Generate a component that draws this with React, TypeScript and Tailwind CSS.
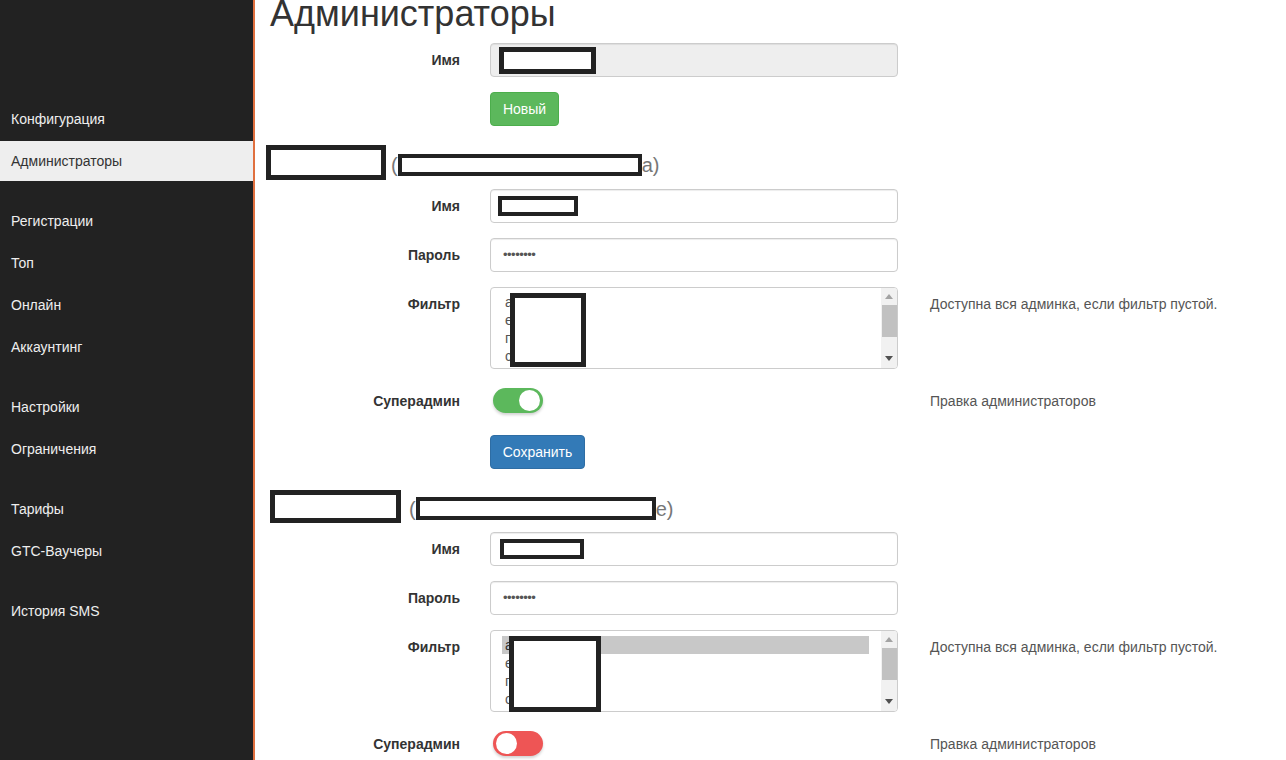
import React from "react";

const navGroups: string[][] = [
  ["Конфигурация", "Администраторы"],
  ["Регистрации", "Топ", "Онлайн", "Аккаунтинг"],
  ["Настройки", "Ограничения"],
  ["Тарифы", "GTC-Ваучеры"],
  ["История SMS"],
];

function Sidebar() {
  return (
    <aside className="w-[255px] shrink-0 bg-[#222222] border-r-2 border-[#e0703f] pt-[99px] min-h-[760px]">
      {navGroups.map((g, gi) => (
        <div key={gi} className="mb-[20px]">
          {g.map((item) => {
            const active = item === "Администраторы";
            return (
              <div
                key={item}
                className={
                  active
                    ? "h-[40px] mb-[2px] flex items-center pl-[11px] bg-[#eeeeee] text-[#333333] text-[14px]"
                    : "h-[40px] mb-[2px] flex items-center pl-[11px] text-[#eeeeee] text-[14px]"
                }
              >
                {item}
              </div>
            );
          })}
        </div>
      ))}
    </aside>
  );
}

function Label({ text }: { text: string }) {
  return (
    <div className="w-[190px] shrink-0 text-right font-bold text-[14px] leading-[20px] pt-[7px] text-[#333333]">
      {text}
    </div>
  );
}

function Row({
  label,
  children,
  help,
  className,
}: {
  label: string;
  children: React.ReactNode;
  help?: string;
  className?: string;
}) {
  return (
    <div className={"flex items-start " + (className ?? "")}>
      <Label text={label} />
      <div className="ml-[30px] w-[408px] shrink-0">{children}</div>
      {help && (
        <div className="ml-[32px] pt-[7px] text-[14px] leading-[20px] text-[#555555]">{help}</div>
      )}
    </div>
  );
}

function NameInput({ w, h, disabled, pl, border }: { w: string; h: string; disabled?: boolean; pl: string; border: string }) {
  return (
    <div
      className={
        (disabled ? "bg-[#eeeeee] " : "bg-white ") +
        "h-[34px] border border-[#cccccc] rounded-[4px] flex items-center shadow-[inset_0_1px_1px_rgba(0,0,0,0.075)] " +
        pl
      }
    >
      <div className={"bg-white border-[#222222] " + w + " " + h + " " + border} />
    </div>
  );
}

function PasswordInput() {
  return (
    <div className="h-[34px] border border-[#cccccc] rounded-[4px] flex items-center pl-[12px] bg-white shadow-[inset_0_1px_1px_rgba(0,0,0,0.075)] text-[#555555] text-[13px] tracking-[-0.5px]">
      ••••••••
    </div>
  );
}

function FilterBox({ selected, second }: { selected?: boolean; second?: boolean }) {
  const lines = ["a", "e", "п", "c"];
  return (
    <div className="relative w-[408px] h-[82px]">
      <div className="w-[408px] h-[82px] border border-[#cccccc] rounded-[4px] overflow-hidden bg-white flex">
        <div className="flex-1 pt-[5px] pl-[11px] pr-[12px] text-[14px] leading-[18px] text-[#555555]">
          {lines.map((l, i) => (
            <div
              key={i}
              className={
                selected && i === 0 ? "px-[3px] bg-[#c8c8c8] text-[#333333]" : "px-[3px]"
              }
            >
              {l}
            </div>
          ))}
        </div>
        <div className="w-[16px] bg-[#f1f1f1] flex flex-col items-center relative">
          <div className="mt-[6px] w-0 h-0 border-l-[4px] border-r-[4px] border-b-[5px] border-l-transparent border-r-transparent border-b-[#a3a3a3]" />
          <div className="mt-[6px] w-[15px] h-[32px] bg-[#c1c1c1]" />
          <div className="flex-1" />
          <div className="mb-[7px] w-0 h-0 border-l-[4px] border-r-[4px] border-t-[5px] border-l-transparent border-r-transparent border-t-[#505050]" />
        </div>
      </div>
      {second ? (
        <div className="absolute left-[19px] top-[6px] w-[92px] h-[76px] bg-white border-[5px] border-[#222222]" />
      ) : (
        <div className="absolute left-[20px] top-[6px] w-[76px] h-[74px] bg-white border-[5px] border-[#222222]" />
      )}
    </div>
  );
}

function Toggle({ on }: { on: boolean }) {
  return (
    <div
      className={
        (on ? "bg-[#5cb85c] " : "bg-[#ee5555] ") +
        "relative mt-[4px] ml-[3px] w-[50px] h-[25px] rounded-full shadow-[0_2px_3px_rgba(0,0,0,0.18)]"
      }
    >
      <div
        className={
          (on ? "right-[3px] " : "left-[3px] ") +
          "absolute top-[2px] w-[21px] h-[21px] rounded-full bg-white"
        }
      />
    </div>
  );
}

function AdminSection({ second }: { second?: boolean }) {
  return (
    <div>
      {second ? (
        <div className="flex items-center h-[33px] mb-[9px] text-[20px] text-[#777777]">
          <div className="w-[131px] h-[33px] bg-white border-[5px] border-[#222222]" />
          <span className="ml-[8px] mt-[4px]">(</span>
          <div className="w-[240px] h-[23px] mt-[4px] bg-white border-[4px] border-[#222222]" />
          <span className="mt-[4px]">e)</span>
        </div>
      ) : (
        <div className="flex items-center h-[35px] mb-[9px] -ml-[4px] text-[20px] text-[#777777]">
          <div className="w-[120px] h-[35px] bg-white border-[5px] border-[#222222]" />
          <span className="ml-[5px] mt-[5px]">(</span>
          <div className="w-[244px] h-[22px] mt-[5px] bg-white border-[4px] border-[#222222]" />
          <span className="mt-[5px]">a)</span>
        </div>
      )}
      <Row label="Имя" className="mb-[15px]">
        {second ? (
          <NameInput w="w-[84px]" h="h-[20px]" pl="pl-[9px]" border="border-[4px]" />
        ) : (
          <NameInput w="w-[80px]" h="h-[20px]" pl="pl-[7px]" border="border-[4px]" />
        )}
      </Row>
      <Row label="Пароль" className="mb-[15px]">
        <PasswordInput />
      </Row>
      <Row label="Фильтр" className="mb-[15px]" help="Доступна вся админка, если фильтр пустой.">
        <FilterBox selected={second} second={second} />
      </Row>
      <Row label="Суперадмин" className="h-[34px]" help="Правка администраторов">
        <Toggle on={!second} />
      </Row>
      {!second && (
        <div className="mt-[17px] ml-[220px]">
          <button className="h-[34px] w-[95px] rounded-[4px] bg-[#337ab7] border border-[#2e6da4] text-white text-[14px]">
            Сохранить
          </button>
        </div>
      )}
    </div>
  );
}

export default function App() {
  return (
    <div className="flex w-[1286px] h-[760px] overflow-hidden bg-white font-['Liberation_Sans',Arial,sans-serif] text-[14px] text-[#333333]">
      <Sidebar />
      <main className="flex-1 pl-[15px]">
        <h1 className="mt-[-6px] mb-[9px] text-[36px] leading-[40px] font-normal text-[#333333]">
          Администраторы
        </h1>
        <Row label="Имя" className="mb-[15px]">
          <NameInput disabled w="w-[97px]" h="h-[27px]" pl="pl-[8px]" border="border-[5px]" />
        </Row>
        <div className="ml-[220px]">
          <button className="h-[34px] w-[69px] rounded-[4px] bg-[#5cb85c] border border-[#4cae4c] text-white text-[14px]">
            Новый
          </button>
        </div>
        <div className="mt-[19px]">
          <AdminSection />
        </div>
        <div className="mt-[21px]">
          <AdminSection second />
        </div>
      </main>
    </div>
  );
}
